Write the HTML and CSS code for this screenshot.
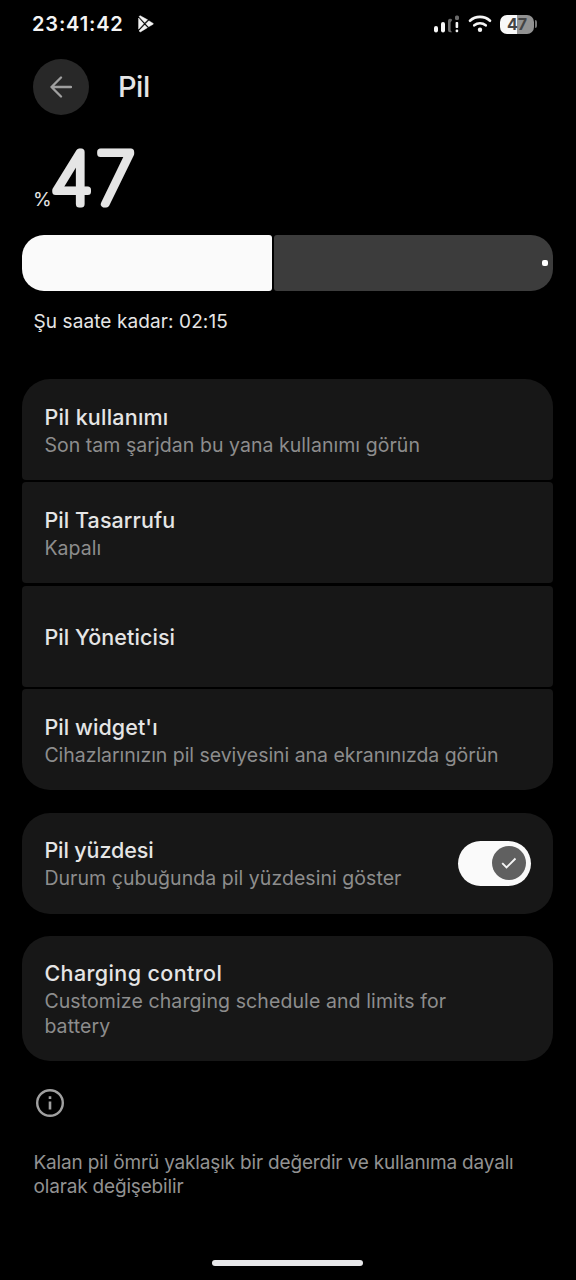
FILE: index.html
```html
<!DOCTYPE html>
<html lang="tr">
<head>
<meta charset="utf-8">
<title>Pil</title>
<link rel="stylesheet" href="styles.css">
</head>
<body>
<div class="screen">
  <header class="status">
    <span class="clock">23:41:42</span>
    <svg class="play" width="16" height="18" viewBox="0 0 16 18"><path d="M1 1.500 6.700 7.600 9.600 4.800 2.200.7zM.6 3v11.200L5.700 8.700zM1 16l5.700-6.100 2.700 2.800-7 4.200zM7.800 8.800l3-3L15.200 8.400v.8L10.600 11.800z" fill="#f4f4f4" stroke="#f4f4f4" stroke-width=".5" stroke-linejoin="round"/></svg>
    <span class="spacer"></span>
    <svg class="signal" width="26" height="20" viewBox="0 0 26 20"><g fill="#f5f5f5"><rect x="0" y="12" width="4" height="6.500" rx="2"/><rect x="7" y="8" width="4" height="10.500" rx="2"/><rect x="21.600" y="8" width="2.600" height="6" rx=".8"/><rect x="21.600" y="15.600" width="2.600" height="2.600" rx="1"/></g><g fill="#6a6a6a"><path d="M14 7a2.200 2.200 0 0 1 4.200-1L16.600 8.500v7.700L18 18.300h-2a2 2 0 0 1-2-2z"/><rect x="21" y="1.500" width="4" height="4.500" rx="1.500"/></g></svg>
    <svg class="wifi" width="24" height="18" viewBox="0 0 24 18"><g fill="none" stroke="#f5f5f5" stroke-width="2.700" stroke-linecap="round"><path d="M2 5.700a15 15 0 0 1 20 0"/><path d="M6.300 10.300a9 9 0 0 1 11.400 0"/></g><circle cx="12" cy="14.800" r="2.200" fill="#f5f5f5"/></svg>
    <span class="battery"><span class="battery-body">47</span><span class="battery-tip"></span></span>
  </header>
  <div class="appbar">
    <span class="back"><svg width="22" height="22" viewBox="0 0 22 22"><path d="M21 11H1.500M11 1.500 1.500 11l9.500 9.500" fill="none" stroke="#a0a0a0" stroke-width="2.300" stroke-linecap="round" stroke-linejoin="round"/></svg></span>
    <h1 class="title">Pil</h1>
  </div>
  <div class="level">
    <span class="percent">%</span>
    <svg class="amount" width="90" height="66" viewBox="0 0 90 66"><text class="digits" x="0.500" y="54.500">47</text></svg>
  </div>
  <div class="meter"><span class="meter-fill"></span><span class="meter-rest"><i class="dot"></i></span></div>
  <p class="until">Şu saate kadar: 02:15</p>

  <section class="group">
    <div class="card"><h2 class="wide">Pil kullanımı</h2><p>Son tam şarjdan bu yana kullanımı görün</p></div>
    <div class="card"><h2>Pil Tasarrufu</h2><p>Kapalı</p></div>
    <div class="card"><h2>Pil Yöneticisi</h2></div>
    <div class="card"><h2>Pil widget'ı</h2><p class="snug">Cihazlarınızın pil seviyesini ana ekranınızda görün</p></div>
  </section>
  <section class="group">
    <div class="card row">
      <div class="label"><h2 class="snug">Pil yüzdesi</h2><p>Durum çubuğunda pil yüzdesini göster</p></div>
      <span class="switch"><span class="thumb"><svg width="16" height="12" viewBox="0 0 16 12"><path d="M1.200 6.200 5.500 10.500 14.500 1.500" fill="none" stroke="#f5f5f5" stroke-width="1.900"/></svg></span></span>
    </div>
  </section>
  <section class="group">
    <div class="card tall"><h2 class="wider">Charging control</h2><p class="wide">Customize charging schedule and limits for<br>battery</p></div>
  </section>
  <footer class="note">
    <svg width="30" height="30" viewBox="0 0 30 30"><circle cx="15" cy="15" r="12.800" fill="none" stroke="#a0a0a0" stroke-width="2.400"/><path d="M15 13.500v8M15 8.300v2.700" stroke="#a0a0a0" stroke-width="2.600"/></svg>
    <p>Kalan pil ömrü yaklaşık bir değerdir ve kullanıma dayalı<br>olarak değişebilir</p>
  </footer>
  <div class="home"></div>
</div>
</body>
</html>
```
FILE: styles.css
```css
* { box-sizing: border-box; margin: 0; padding: 0; }
body { background: #000; color: #e5e5e5; font-family: Inter, "Open Sans", sans-serif; }
.screen { width: 576px; height: 1280px; display: flex; flex-direction: column; overflow: hidden; background: #000; }
.status { display: flex; align-items: center; height: 48px; padding: 0 39px 0 32px; flex: none; }
.clock { font-size: 20px; font-weight: 600; letter-spacing: .85px; color: #f4f4f4; }
.play { margin-left: 14px; }
.spacer { flex: 1; }
.wifi { margin: 0 8px 0 8px; }
.battery { display: flex; align-items: center; gap: 1px; }
.battery-body { width: 34px; height: 19px; border-radius: 7px; background: linear-gradient(90deg, #f8f8f8 50%, #929292 50%); color: #444; font-size: 16px; font-weight: 700; line-height: 19px; text-align: center; }
.battery-tip { width: 2px; height: 8px; border-radius: 0 2px 2px 0; background: #777; }
.appbar { display: flex; align-items: center; height: 78px; padding-left: 33px; flex: none; }
.back { width: 56px; height: 56px; border-radius: 50%; background: #282828; display: flex; align-items: center; justify-content: center; }
.title { margin: 0 0 2px 29px; font-size: 29px; font-weight: 550; letter-spacing: -.5px; }
.level { display: flex; align-items: flex-end; height: 89px; padding-left: 33px; flex: none; }
.percent { font-size: 19px; line-height: 24px; margin-bottom: 3px; width: 17px; }
.amount { overflow: visible; }
.digits { font-size: 71px; font-weight: 100; letter-spacing: 3.500px; fill: #e5e5e5; stroke: #e5e5e5; stroke-width: 7px; stroke-linejoin: round; }
.meter { display: flex; gap: 2px; height: 56px; margin: 20px 23px 0 22.400px; flex: none; }
.meter-fill { width: 249.600px; background: #fafafa; border-radius: 22px 3px 3px 22px; }
.meter-rest { flex: 1; background: #3c3c3c; border-radius: 3px 22px 22px 3px; display: flex; align-items: center; justify-content: flex-end; padding-right: 5.500px; }
.dot { width: 6px; height: 6px; border-radius: 2px; background: #fff; }
.until { font-size: 19px; line-height: 24px; letter-spacing: .1px; margin: 19px 0 45px 33.500px; flex: none; }
.group { display: flex; flex-direction: column; gap: 2.700px; margin: 0 23px 22.500px 22.400px; border-radius: 28px; overflow: hidden; flex: none; }
.card { height: 100.800px; padding: 2px 22px 0; background: #171717; border-radius: 4px; display: flex; flex-direction: column; justify-content: center; }
.card h2 { font-size: 21.500px; line-height: 28px; font-weight: 500; letter-spacing: .08px; }
.card h2.snug { letter-spacing: -.1px; }
.card h2.wide { letter-spacing: .22px; }
.card h2.wider { letter-spacing: .4px; }
.card p { margin-top: 2px; font-size: 19.500px; line-height: 25px; letter-spacing: .05px; color: #8d8d8d; }
.card p.snug { letter-spacing: -.04px; }
.card p.wide { letter-spacing: .1px; }
.card.row { flex-direction: row; align-items: center; justify-content: space-between; padding-top: 0; }
.label { padding-top: 1px; }
.card.tall { height: 124.500px; }
.switch { width: 73px; height: 45px; border-radius: 23px; background: #fafafa; display: flex; align-items: center; justify-content: flex-end; padding-right: 5px; }
.thumb { width: 34px; height: 34px; border-radius: 50%; background: #606060; display: flex; align-items: center; justify-content: center; }
.note { padding: 5px 0 0 33.500px; font-size: 19px; line-height: 24.500px; letter-spacing: -.17px; color: #929292; }
.note svg { display: block; margin: 0 0 32.500px 1.500px; }
.home { width: 151px; height: 6px; border-radius: 3px; background: #e8e8ea; margin: auto 0 14px 212px; flex: none; }
```
